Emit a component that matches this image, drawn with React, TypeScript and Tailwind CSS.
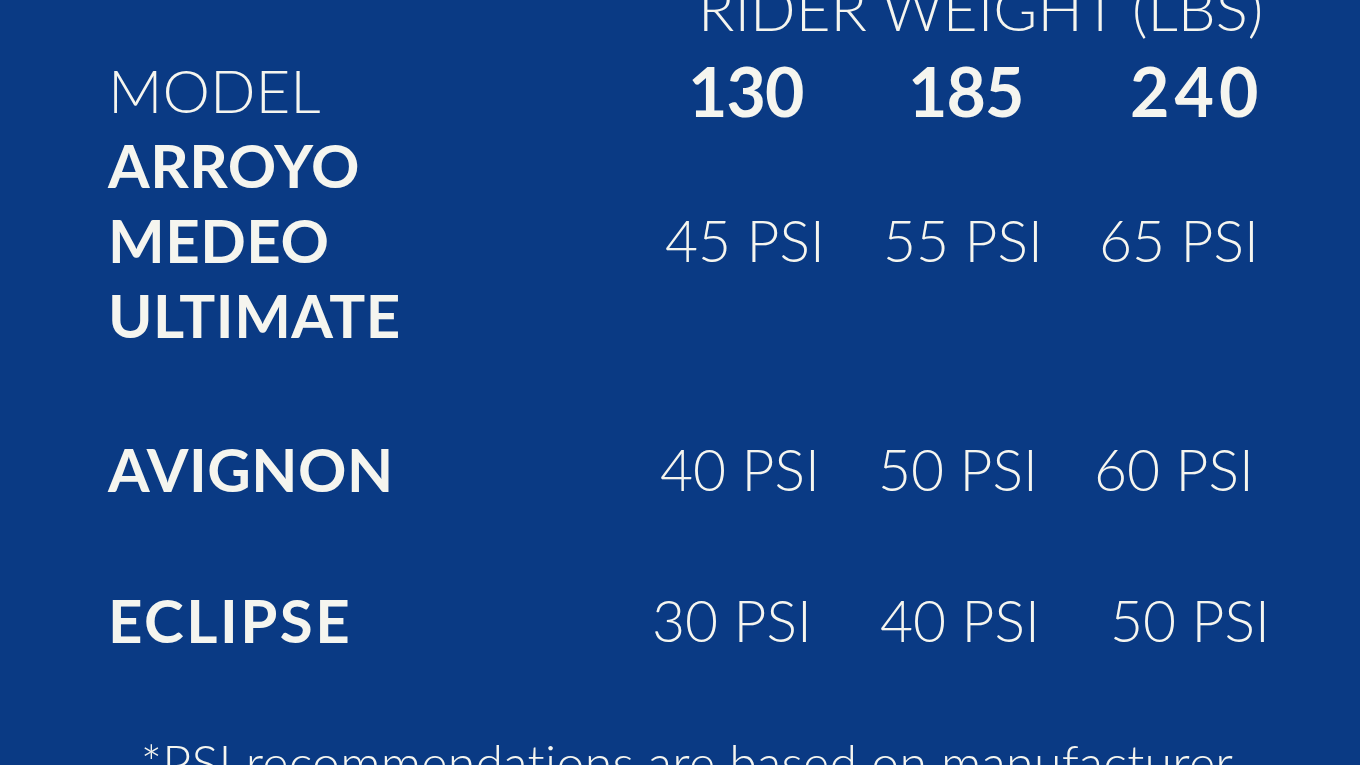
const rows = [
  { name: 'ARROYO', cells: [] as { text: string; pl: string }[] },
  {
    name: 'MEDEO',
    cells: [
      { text: '45 PSI', pl: 'pl-[25px]' },
      { text: '55 PSI', pl: 'pl-[23px]' },
      { text: '65 PSI', pl: 'pl-[19px]' },
    ],
  },
  { name: 'ULTIMATE', cells: [] },
]

const PsiCell = ({ text, pl }: { text: string; pl: string }) => (
  <div className={`${pl} whitespace-nowrap font-light text-[57px]`}>{text}</div>
)

const App = () => {
  return (
    <div
      className="h-[765px] w-full overflow-hidden bg-[#0a3a84] text-[#f5f5ef]"
      style={{ fontFamily: 'Lato, "Open Sans", sans-serif' }}
    >
      <div className="pl-[108px] leading-[75px]">
        {/* header */}
        <div className="-mt-[29px] grid grid-cols-[532px_220px_220px_220px]">
          <div />
          <div className="col-span-3 whitespace-nowrap pl-[58px] text-[60px] font-light">RIDER WEIGHT (LBS)</div>
        </div>

        <div className="mt-[7px] grid grid-cols-[532px_220px_220px_220px]">
          <div className="text-[60px] font-light">MODEL</div>
          <div className="pl-[48px] text-[68px] font-bold tracking-[-1px]">130</div>
          <div className="pl-[48px] text-[68px] font-bold tracking-[-1px]">185</div>
          <div className="pl-[50px] text-[68px] font-bold tracking-[5px]">240</div>
        </div>

        {/* pumped models */}
        {rows.map((r) => (
          <div key={r.name} className="grid h-[75px] grid-cols-[532px_220px_220px_220px]">
            <div className="text-[60px] font-bold tracking-[0.5px]">{r.name}</div>
            {r.cells.map((c) => (
              <PsiCell key={c.text} {...c} />
            ))}
          </div>
        ))}

        <div className="mt-[79px] grid grid-cols-[532px_220px_220px_220px]">
          <div className="text-[60px] font-bold tracking-[0.5px]">AVIGNON</div>
          <PsiCell text="40 PSI" pl="pl-[20px]" />
          <PsiCell text="50 PSI" pl="pl-[18px]" />
          <PsiCell text="60 PSI" pl="pl-[14px]" />
        </div>

        <div className="mt-[76px] grid grid-cols-[532px_220px_220px_220px]">
          <div className="text-[60px] font-bold tracking-[2.5px]">ECLIPSE</div>
          <PsiCell text="30 PSI" pl="pl-[12px]" />
          <PsiCell text="40 PSI" pl="pl-[20px]" />
          <PsiCell text="50 PSI" pl="pl-[30px]" />
        </div>
      </div>

      <p className="mt-[74px] whitespace-nowrap pl-[14px] text-center text-[50px] font-light leading-[1.2] tracking-[0.3px]">
        *PSI recommendations are based on manufacturer
      </p>
    </div>
  )
}

export default App
